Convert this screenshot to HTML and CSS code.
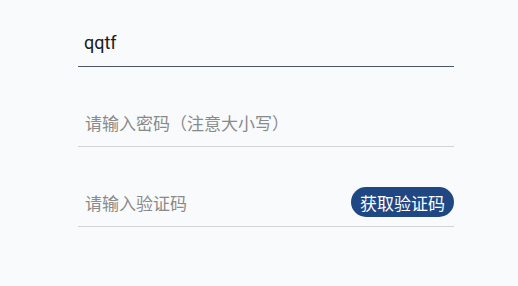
FILE: index.html
```html
<!DOCTYPE html>
<html lang="zh">
<head>
<meta charset="utf-8">
<link rel="stylesheet" href="styles.css">
</head>
<body>
<div class="form">
  <div class="field field-active"><span class="value">qqtf</span></div>
  <div class="field"><span class="placeholder">请输入密码（注意大小写）</span></div>
  <div class="field"><span class="placeholder">请输入验证码</span><button class="code-btn">获取验证码</button></div>
</div>
</body>
</html>
```

FILE: styles.css
```css
html, body {
  margin: 0;
  padding: 0;
  background: #f8fafc;
  font-family: Roboto, "Noto Sans CJK SC", sans-serif;
}
.form {
  margin-left: 78px;
  width: 376px;
  padding-top: 18px;
  display: flex;
  flex-direction: column;
  gap: 31px;
}
.field {
  height: 48px;
  display: flex;
  align-items: center;
  justify-content: space-between;
  border-bottom: 1px solid #d2d4d6;
}
.field-active {
  border-bottom-color: #4b5966;
}
.value {
  margin-left: 6px;
  font-size: 18px;
  color: #1a1a1a;
}
.placeholder {
  margin-left: 7px;
  font-size: 17px;
  color: #8a8a8a;
}
.code-btn {
  height: 30px;
  padding: 0 9px;
  border: none;
  border-radius: 15px;
  background: #1f4784;
  color: #fff;
  font-family: "Noto Sans CJK SC", sans-serif;
  font-size: 17px;
}
```
